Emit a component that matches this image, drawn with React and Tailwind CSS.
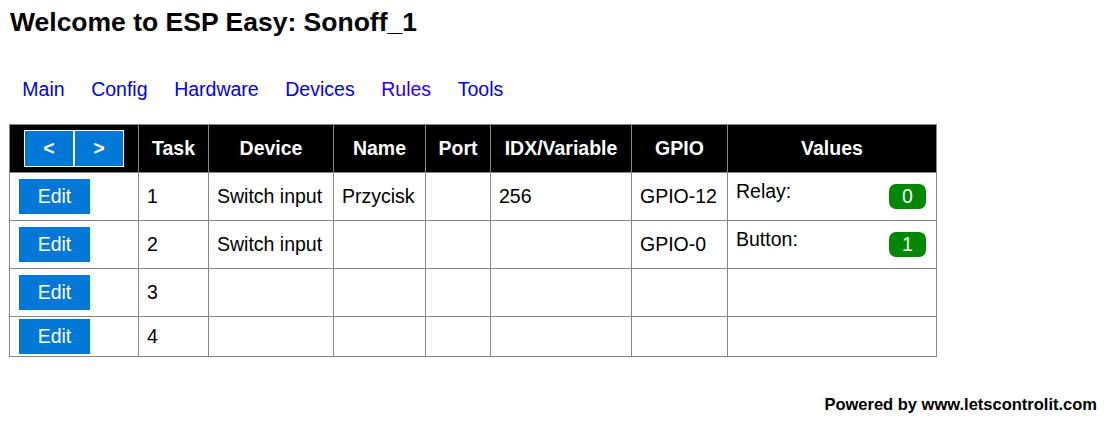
import React from 'react';

const links = ['Main', 'Config', 'Hardware', 'Devices', 'Rules', 'Tools'];

const rows = [
  { task: 1, device: 'Switch input', name: 'Przycisk', idx: '256', gpio: 'GPIO-12', label: 'Relay:', value: '0' },
  { task: 2, device: 'Switch input', name: '', idx: '', gpio: 'GPIO-0', label: 'Button:', value: '1' },
  { task: 3 },
  { task: 4, short: true },
];

const App = () => {
  return (
    <div className="min-h-screen bg-white text-black leading-[normal] font-['Liberation_Sans',Arial,sans-serif]">
      <div className="px-[9px] pt-[7px]">
        <h1 className="text-[26.5px] font-bold pl-[1px]">Welcome to ESP Easy: Sonoff_1</h1>

        {/* Top menu */}
        <nav className="flex mt-[40px]">
          {links.map(l => (
            <a
              key={l}
              href="#"
              className={`text-[19.5px] px-[13.3px] ${l === 'Rules' ? 'text-[#2a00ee]' : 'text-[#0000ee]'}`}
            >
              {l}
            </a>
          ))}
        </nav>

        {/* Device table */}
        <table className="mt-[23px] w-[927px] table-fixed border-collapse text-[19.5px]">
          <colgroup>
            <col className="w-[129px]" />
            <col className="w-[70px]" />
            <col className="w-[125px]" />
            <col className="w-[92px]" />
            <col className="w-[65px]" />
            <col className="w-[141px]" />
            <col className="w-[96px]" />
            <col className="w-[209px]" />
          </colgroup>
          <thead>
            <tr className="h-[48px] bg-black text-white font-bold">
              <th className="border border-[#888] p-0">
                <div className="flex justify-center">
                  <button className="w-[50px] h-[37px] bg-[#0078d7] border border-white text-white font-bold">&lt;</button>
                  <button className="w-[50px] h-[37px] bg-[#0078d7] border border-white text-white font-bold">&gt;</button>
                </div>
              </th>
              <th className="border border-[#888]">Task</th>
              <th className="border border-[#888]">Device</th>
              <th className="border border-[#888]">Name</th>
              <th className="border border-[#888]">Port</th>
              <th className="border border-[#888] whitespace-nowrap">IDX/Variable</th>
              <th className="border border-[#888]">GPIO</th>
              <th className="border border-[#888]">Values</th>
            </tr>
          </thead>
          <tbody>
            {rows.map(r => (
              <tr key={r.task} className={r.short ? 'h-[40px]' : 'h-[48px]'}>
                <td className="border border-[#888] px-[8px] py-0">
                  <button className="ml-[1px] w-[71px] h-[35px] bg-[#0078d7] text-white">Edit</button>
                </td>
                <td className="border border-[#888] px-[8px]">{r.task}</td>
                <td className="border border-[#888] px-[8px] whitespace-nowrap">{r.device}</td>
                <td className="border border-[#888] px-[8px]">{r.name}</td>
                <td className="border border-[#888] px-[8px]"></td>
                <td className="border border-[#888] px-[8px]">{r.idx}</td>
                <td className="border border-[#888] px-[8px] whitespace-nowrap">{r.gpio}</td>
                <td className="border border-[#888] px-[8px] pt-[8px] align-top">
                  {r.label && (
                    <div className="flex justify-between items-start">
                      <span className="-mt-[1px]">{r.label}</span>
                      <span className="m-[2px] mt-[3px] w-[37px] h-[25px] rounded-[7px] bg-[#008800] text-white flex items-center justify-center">
                        {r.value}
                      </span>
                    </div>
                  )}
                </td>
              </tr>
            ))}
          </tbody>
        </table>
      </div>

      {/* Footer */}
      <div className="flex justify-end pr-[20px] mt-[38px]">
        <span className="text-[16.5px] font-bold">Powered by www.letscontrolit.com</span>
      </div>
    </div>
  );
};

export default App;
